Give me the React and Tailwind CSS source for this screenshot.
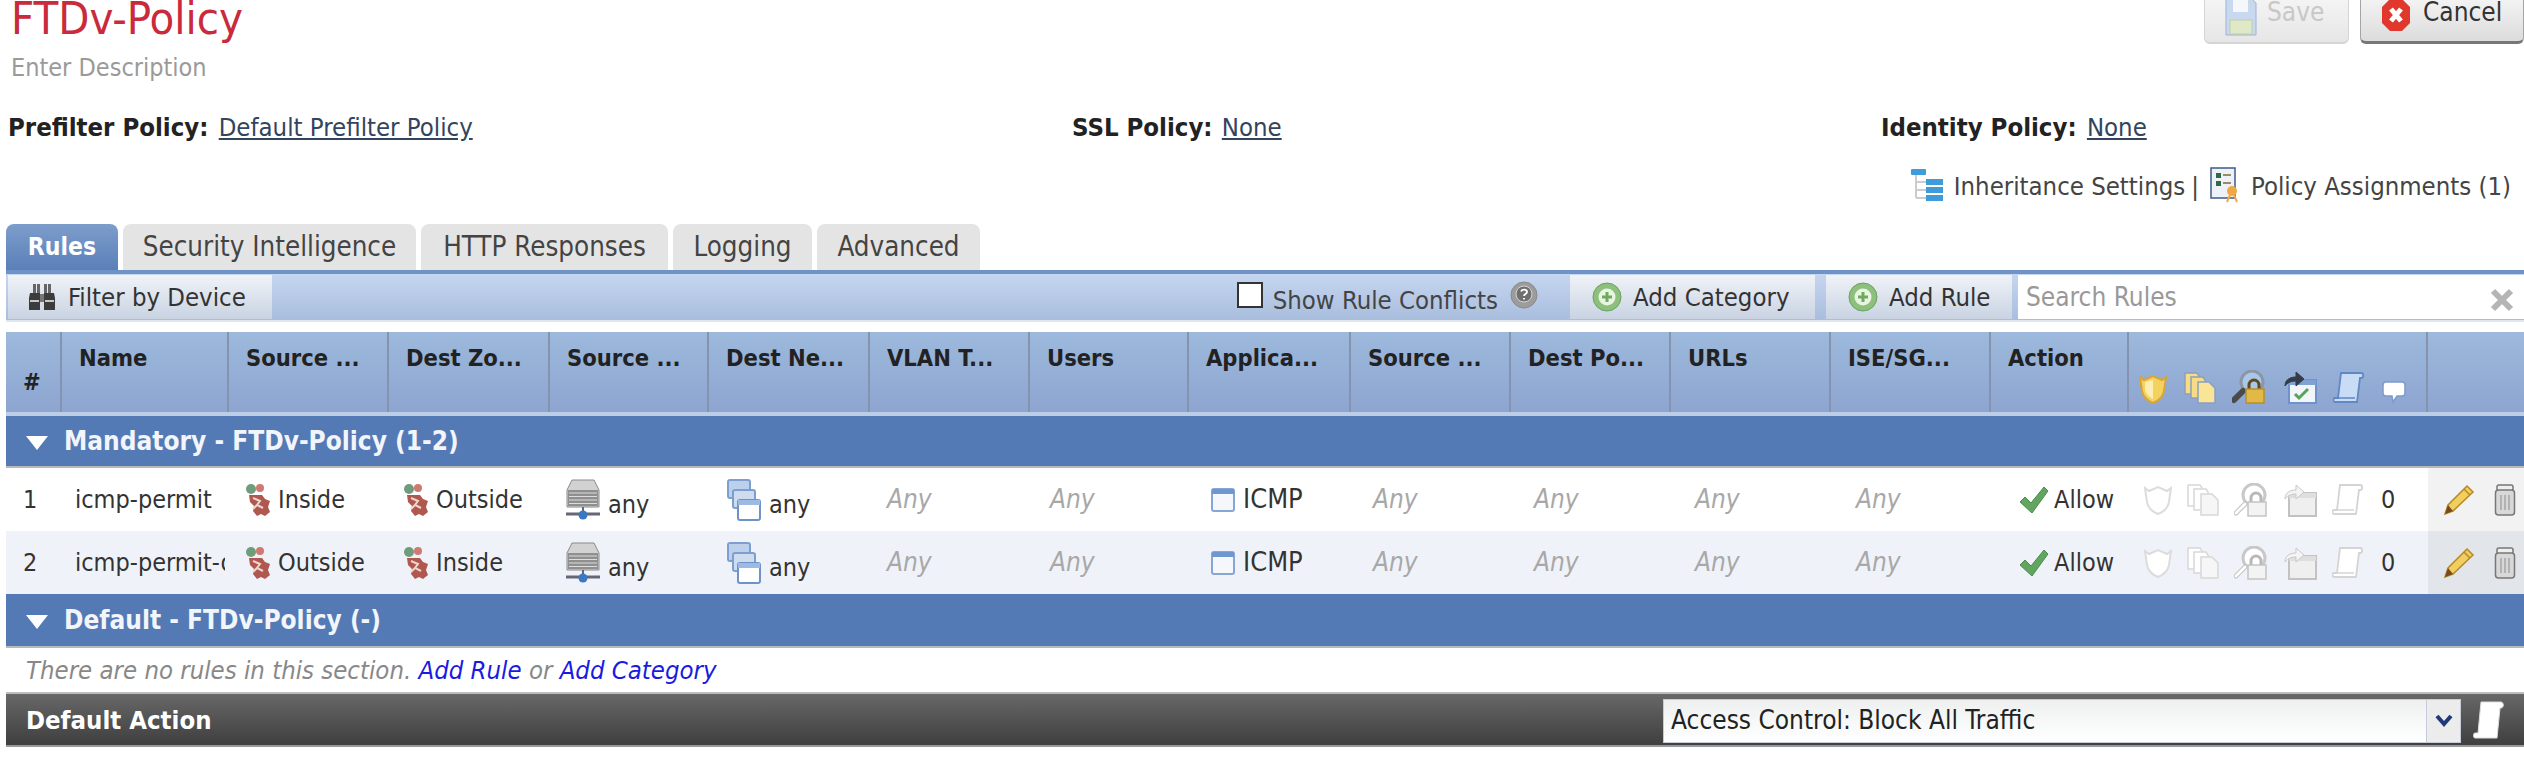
import React from 'react';

const font = { fontFamily: '"DejaVu Sans Condensed", "DejaVu Sans", sans-serif', fontStretch: 'condensed' };

const colsClass = 'grid grid-cols-[56px_167px_160px_161px_159px_161px_160px_159px_162px_160px_160px_160px_160px_138px_299px_96px]';

// -- Icons --

const ZoneIcon = () => (
    <svg width="26" height="34" viewBox="0 0 26 34" className="shrink-0">
        <circle cx="6" cy="6" r="5" fill="#6f9d7c" />
        <circle cx="15" cy="5" r="4" fill="#cf7a70" />
        <path d="M4 12h13l3 4 5 2-2 6 2 5-5 4-4-2-4 2-4-5 1-5-4-4z" fill="#b0574f" />
        <path d="M8 15l7 3-3 4 6 3M8 26l4-4" fill="none" stroke="#efd6cb" strokeWidth="2" />
    </svg>
);

const ServerIcon = () => (
    <svg width="34" height="42" viewBox="0 0 34 42" className="shrink-0">
        <path d="M6 1h22l5 10v17H1V11z" fill="#d2d2d2" stroke="#8a8a8a" />
        <rect x="2" y="11" width="30" height="16" fill="#8f8f8f" />
        <path d="M3 14h28M3 17.5h28M3 21h28M3 24.5h28" stroke="#dcdcdc" strokeWidth="1.2" />
        <path d="M0 35h34" stroke="#667" strokeWidth="3" />
        <path d="M17 28v6" stroke="#667" strokeWidth="2" />
        <circle cx="17" cy="36" r="4.5" fill="#3b78c4" />
    </svg>
);

const NetIcon = () => (
    <svg width="34" height="42" viewBox="0 0 34 42" className="shrink-0">
        <rect x="1" y="1" width="22" height="18" rx="2" fill="#bcd0ec" stroke="#7d9fd0" strokeWidth="2" />
        <rect x="6" y="11" width="22" height="18" rx="2" fill="#cfdcf0" stroke="#7d9fd0" strokeWidth="2" />
        <rect x="11" y="21" width="22" height="20" rx="2" fill="#fff" stroke="#6d93c9" strokeWidth="2" />
        <rect x="11" y="21" width="22" height="5" fill="#9dbae3" />
    </svg>
);

const AppIcon = () => (
    <svg width="24" height="26" viewBox="0 0 24 26" className="shrink-0">
        <rect x="1" y="2" width="22" height="22" rx="2" fill="#f6f7fb" stroke="#86a6d6" strokeWidth="2" />
        <rect x="1" y="2" width="22" height="5" fill="#6f96d0" />
    </svg>
);

const Check = () => (
    <svg width="30" height="28" viewBox="0 0 30 28" className="shrink-0">
        <path d="M1 16l5-5 6 6L25 1l4 4-16 22z" fill="#62a560" stroke="#4b8c4b" />
    </svg>
);

const PlusIcon = () => (
    <svg width="30" height="30" viewBox="0 0 30 30" className="shrink-0">
        <circle cx="15" cy="15" r="14" fill="#8cc07c" stroke="#6aa35e" />
        <circle cx="15" cy="15" r="8.5" fill="#e9f4e2" />
        <path d="M15 10v10M10 15h10" stroke="#6fab5f" strokeWidth="3" />
    </svg>
);

const HelpIcon = () => (
    <svg width="28" height="28" viewBox="0 0 28 28" className="shrink-0">
        <circle cx="14" cy="14" r="13" fill="#9c9c9c" stroke="#8a8a8a" />
        <circle cx="14" cy="13" r="8" fill="#6f6f6f" stroke="#d5d5d5" />
        <path d="M11 10.5c1-2.5 6-2.5 6 .5 0 2-3 2-3 4M14 17v1.5" fill="none" stroke="#fff" strokeWidth="1.8" />
    </svg>
);

const Binoculars = () => (
    <svg width="28" height="28" viewBox="0 0 28 28" className="shrink-0">
        <path d="M5 1h3v9H5zM9 1h3v9H9zM16 1h3v9h-3zM20 1h3v9h-3z" fill="#666" />
        <path d="M2 10h10v17H1V15zM16 10h10l1 5v12H16z" fill="#3c3c3c" />
        <path d="M12 11h4v8h-4z" fill="#777" />
        <path d="M2 18h9M17 18h9" stroke="#c8c8c8" strokeWidth="2" />
    </svg>
);

const ShieldIcon = ({ on }) => (
    <svg width="28" height="30" viewBox="0 0 28 30">
        <path d="M1 3l4 3 9-4 9 4 4-3-2 14c-1 6-6 10-11 12C9 27 4 23 3 17z" fill={on ? '#f4d25f' : '#fff'} stroke={on ? '#d9a53a' : '#dcdcdc'} strokeWidth="2" />
        {on && <path d="M14 6v19c-4-2-7-5-8-9V8z" fill="#fbeeb0" />}
    </svg>
);

const CopyIcon = ({ on }) => {
    const fill = on ? '#f6dc84' : '#fff';
    const stroke = on ? '#8c9fc2' : '#d8d8d8';
    return (
        <svg width="32" height="32" viewBox="0 0 32 32">
            <path d="M1 1h12l2 3v18H1z" fill={fill} stroke={stroke} strokeWidth="1.5" />
            <path d="M7 5h12l2 3v18H7z" fill={fill} stroke={stroke} strokeWidth="1.5" />
            <path d="M14 10h11l6 6v15H14z" fill={on ? '#fae597' : '#f6f6f6'} stroke={stroke} strokeWidth="1.5" />
        </svg>
    );
};

const LockIcon = ({ on }) => (
    <svg width="34" height="34" viewBox="0 0 34 34">
        <circle cx="20" cy="12" r="11" fill={on ? '#a9c7e8' : '#fff'} stroke={on ? '#8b97a6' : '#c8c8c8'} strokeWidth="3" />
        <path d="M11 21L2 30" stroke={on ? '#4a4a4a' : '#c8c8c8'} strokeWidth={on ? 6 : 5} strokeLinecap="round" />
        {!on && <path d="M11 21L2 30" stroke="#fff" strokeWidth="2.5" strokeLinecap="round" />}
        <path d="M17 19v-4a5 5 0 0 1 10 0v4" fill="none" stroke={on ? '#5e4a1c' : '#b8b8b8'} strokeWidth="3" />
        <rect x="14" y="19" width="18" height="14" fill={on ? '#e2b846' : '#f3f3f3'} stroke={on ? '#b88f2c' : '#c4c4c4'} strokeWidth="1.5" />
    </svg>
);

const MoveIcon = ({ on }) => (
    <svg width="34" height="34" viewBox="0 0 34 34">
        <rect x="6" y="10" width="27" height="23" fill={on ? '#f2f6fc' : '#efefef'} stroke={on ? '#6f93c8' : '#c2c2c2'} strokeWidth="2" />
        <rect x="6" y="10" width="27" height="5" fill={on ? '#7fa2d6' : '#dedede'} />
        {on && <path d="M12 24l4 4 9-9" fill="none" stroke="#57a35a" strokeWidth="3" />}
        <path d="M2 16c0-7 6-9 11-9V2l8 7-8 7v-5c-4 0-8 1-11 5z" fill={on ? '#333c48' : '#f4f4f4'} stroke={on ? '#333c48' : '#c8c8c8'} />
    </svg>
);

const ScrollIcon = ({ on }) => (
    <svg width="32" height="32" viewBox="0 0 32 32">
        <path d="M8 1h20c3 0 3 5 0 5h-1l-3 24H2c-2 0-2-4 0-4h3z" fill={on ? '#c9dcf6' : '#fff'} stroke={on ? '#5f88c4' : '#d4d4d4'} strokeWidth="1.8" />
        <path d="M2 26h20" stroke={on ? '#5f88c4' : '#d4d4d4'} strokeWidth="1.5" />
    </svg>
);

const CommentIcon = () => (
    <svg width="24" height="24" viewBox="0 0 24 24">
        <path d="M4 2h16a3 3 0 0 1 3 3v8a3 3 0 0 1-3 3h-5l-4 6-1-6H4a3 3 0 0 1-3-3V5a3 3 0 0 1 3-3z" fill="#fff" stroke="#7d9acb" strokeWidth="1.5" />
    </svg>
);

const Pencil = () => (
    <svg width="32" height="32" viewBox="0 0 32 32">
        <path d="M24 2l6 6L10 27l-8 3 3-9z" fill="#f1cf5e" stroke="#b58a2a" strokeWidth="1.5" />
        <path d="M5 21l5 6-8 3z" fill="#7a4a1e" />
        <path d="M21 5l6 6" stroke="#b58a2a" strokeWidth="1.5" />
    </svg>
);

const Trash = () => (
    <svg width="22" height="32" viewBox="0 0 22 32">
        <rect x="3" y="1" width="16" height="6" rx="2" fill="#eee" stroke="#777" strokeWidth="1.5" />
        <rect x="1.5" y="6" width="19" height="25" rx="3" fill="#d8d8d8" stroke="#777" strokeWidth="1.5" />
        <path d="M7 11v15M11 11v15M15 11v15" stroke="#a5a5a5" strokeWidth="1.5" />
    </svg>
);

// -- Rows --

const rules = [
    { n: 1, name: 'icmp-permit', from: 'Inside', to: 'Outside', alt: false },
    { n: 2, name: 'icmp-permit-out', from: 'Outside', to: 'Inside', alt: true },
];

const headers = ['Name', 'Source ...', 'Dest Zo...', 'Source ...', 'Dest Ne...', 'VLAN T...', 'Users', 'Applica...', 'Source ...', 'Dest Po...', 'URLs', 'ISE/SG...', 'Action'];

const AnyCell = ({ pad }) => <div className={`${pad} italic text-[#a8a8a8] text-[26px]`}>Any</div>;

function RuleRow({ rule }) {
    return (
        <div className={`${colsClass} h-[63px] items-center text-[25px] text-[#333] ${rule.alt ? 'bg-[#eff3f9]' : 'bg-white'}`}>
            <div className="pl-[17px]">{rule.n}</div>
            <div className="pl-[13px] mr-[4px] overflow-hidden whitespace-nowrap">{rule.name}</div>
            <div className="pl-[16px] flex items-center gap-[7px]"><ZoneIcon />{rule.from}</div>
            <div className="pl-[14px] flex items-center gap-[7px]"><ZoneIcon />{rule.to}</div>
            <div className="pl-[16px] flex items-end gap-[8px]"><ServerIcon /><span className="leading-[32px]">any</span></div>
            <div className="pl-[18px] flex items-end gap-[8px]"><NetIcon /><span className="leading-[32px]">any</span></div>
            <AnyCell pad="pl-[17px]" />
            <AnyCell pad="pl-[20px]" />
            <div className="pl-[22px] flex items-center gap-[8px]"><AppIcon /><span className="text-[27px]">ICMP</span></div>
            <AnyCell pad="pl-[22px]" />
            <AnyCell pad="pl-[23px]" />
            <AnyCell pad="pl-[24px]" />
            <AnyCell pad="pl-[25px]" />
            <div className="pl-[28px] flex items-center gap-[5px]"><Check />Allow</div>
            <div className="pl-[15px] flex items-center gap-[15px]">
                <ShieldIcon />
                <CopyIcon />
                <LockIcon />
                <MoveIcon />
                <ScrollIcon />
                <span className="ml-[2px]">0</span>
            </div>
            <div className={`h-full pl-[15px] flex items-center gap-[19px] ${rule.alt ? 'bg-[#e2e5ea]' : 'bg-[#f2f2f2]'}`}>
                <Pencil />
                <Trash />
            </div>
        </div>
    );
}

function SectionBar({ children, className }) {
    return (
        <div className={`bg-[#547ab5] border-b-2 border-[#b9b9b9] flex items-center pl-[20px] gap-[16px] font-bold text-[26px] text-[#f2f5fa] ${className}`}>
            <span className="w-0 h-0 border-l-[11px] border-r-[11px] border-t-[14px] border-l-transparent border-r-transparent border-t-white mt-[4px]" />
            {children}
        </div>
    );
}

const ToolButton = ({ children, className }) => (
    <div className={`h-[44px] flex items-center bg-gradient-to-b from-[#f0f3f8] to-[#c9d3e2] text-[25.5px] text-[#333] ${className}`}>
        {children}
    </div>
);

export default function App() {
    return (
        <div className="w-[2524px] h-[770px] bg-white overflow-hidden" style={font}>
            {/* Title and save buttons */}
            <div className="h-[110px] flex justify-between">
                <div className="pl-[11px]">
                    <div className="text-[45px] leading-[46px] -mt-[4px] text-[#c92a3c]">FTDv-Policy</div>
                    <div className="text-[25px] leading-[26px] mt-[13px] text-[#9a9a9a]">Enter Description</div>
                </div>
                <div className="flex gap-[11px] -mt-[20px] h-[64px]">
                    <div className="w-[145px] rounded-b-[6px] border border-[#d5d5d5] border-b-2 bg-gradient-to-b from-[#fafafa] to-[#e6e6e6] flex items-center pl-[20px] pt-[2px] gap-[10px] text-[26px] text-[#c8c8c8]">
                        <svg width="32" height="38" viewBox="0 0 32 38" className="shrink-0 mt-[8px]">
                            <path d="M1 1h26l4 4v32H1z" fill="#c8d8ef" stroke="#9cb4d8" />
                            <rect x="8" y="1" width="15" height="13" fill="#f5f7fb" />
                            <rect x="5" y="22" width="22" height="14" fill="#dfe8c7" stroke="#c2cfa3" />
                        </svg>
                        Save
                    </div>
                    <div className="w-[164px] rounded-b-[6px] border border-[#a5a5a5] border-b-[3px] border-b-[#777] bg-gradient-to-b from-[#fdfdfd] to-[#dcdcdc] flex items-center pl-[20px] pt-[2px] gap-[12px] text-[26px] text-[#333]">
                        <svg width="30" height="34" viewBox="0 0 30 34" className="shrink-0 mt-[6px]">
                            <path d="M9 1h12l8 8v16l-8 8H9l-8-8V9z" fill="#e0382c" />
                            <path d="M10 11l10 12M20 11L10 23" stroke="#fff" strokeWidth="5" />
                        </svg>
                        Cancel
                    </div>
                </div>
            </div>

            {/* Policy links */}
            <div className="h-[34px] flex items-center text-[25.5px] text-[#222]">
                <div className="w-[1072px] pl-[8px]"><b>Prefilter Policy:</b> <a className="ml-[3px] text-[#33445e] underline">Default Prefilter Policy</a></div>
                <div className="w-[809px]"><b>SSL Policy:</b> <a className="ml-[2px] text-[#33445e] underline">None</a></div>
                <div><b>Identity Policy:</b> <a className="ml-[3px] text-[#33445e] underline">None</a></div>
            </div>

            <div className="h-[80px] pt-[23px] pr-[13px] flex justify-end items-start gap-[11px] text-[25.5px] text-[#444]">
                <svg width="32" height="32" viewBox="0 0 32 32" className="shrink-0 mt-[2px]">
                    <path d="M5 5v24M5 13h10M5 21h10M5 29h10" stroke="#ccc" strokeWidth="2" fill="none" />
                    <rect x="0" y="0" width="15" height="6" rx="1" fill="#3f9cd8" />
                    <rect x="15" y="10" width="17" height="6" fill="#3f9cd8" />
                    <rect x="15" y="18" width="17" height="6" fill="#3f9cd8" />
                    <rect x="15" y="26" width="17" height="6" fill="#3f9cd8" />
                </svg>
                <span>Inheritance Settings</span>
                <span className="-ml-[5px]">|</span>
                <svg width="30" height="36" viewBox="0 0 30 36" className="shrink-0">
                    <rect x="1" y="1" width="24" height="30" fill="#eef2f8" stroke="#3c5a8c" strokeWidth="1.5" />
                    <rect x="6" y="6" width="5" height="5" fill="#2e6b3e" />
                    <rect x="6" y="14" width="5" height="5" fill="#2e6b3e" />
                    <path d="M13 8h8M13 16h8" stroke="#9a8a6a" strokeWidth="2" />
                    <circle cx="22" cy="24" r="5" fill="#f0a840" />
                    <path d="M20 28l-3 7M24 28l3 7" stroke="#f0a840" strokeWidth="2" />
                </svg>
                <span>Policy Assignments (1)</span>
            </div>

            {/* Tabs */}
            <div className="h-[46px] pl-[6px] flex gap-[5px] text-[27.5px] text-[#444]">
                <div className="w-[112px] rounded-t-[8px] bg-gradient-to-b from-[#7d9dcb] to-[#5a80b8] flex items-center justify-center font-bold text-white text-[24.5px]">Rules</div>
                <div className="w-[293px] rounded-t-[8px] bg-[#e4e4e4] flex items-center justify-center">Security Intelligence</div>
                <div className="w-[247px] rounded-t-[8px] bg-[#e4e4e4] flex items-center justify-center">HTTP Responses</div>
                <div className="w-[139px] rounded-t-[8px] bg-[#e4e4e4] flex items-center justify-center">Logging</div>
                <div className="w-[163px] rounded-t-[8px] bg-[#e4e4e4] flex items-center justify-center">Advanced</div>
            </div>

            {/* Toolbar */}
            <div className="ml-[6px]">
                <div className="h-[52px] border-t-4 border-[#6f93c6] border-b-2 border-b-[#dfe6f2] bg-gradient-to-b from-[#c5d6f0] to-[#a9bddd] flex items-center justify-between">
                    <ToolButton className="w-[264px] ml-[2px] pl-[20px] gap-[12px]">
                        <Binoculars />
                        Filter by Device
                    </ToolButton>
                    <div className="flex items-center">
                        <div className="w-[26px] h-[26px] border-2 border-[#333] bg-white -mt-[4px]" />
                        <span className="ml-[10px] mt-[6px] text-[25.5px] text-[#444]">Show Rule Conflicts</span>
                        <span className="ml-[12px] -mt-[4px]"><HelpIcon /></span>
                        <ToolButton className="w-[245px] ml-[32px] pl-[22px] gap-[11px]"><PlusIcon />Add Category</ToolButton>
                        <ToolButton className="w-[186px] ml-[11px] pl-[22px] gap-[11px]"><PlusIcon />Add Rule</ToolButton>
                        <div className="w-[506px] h-[44px] ml-[6px] bg-white flex items-center justify-between pl-[8px] pr-[10px] text-[26px] text-[#999]">
                            Search Rules
                            <svg width="24" height="24" viewBox="0 0 24 24" className="mt-[6px]">
                                <path d="M3 3l18 18M21 3L3 21" stroke="#b5b5b5" strokeWidth="6" />
                            </svg>
                        </div>
                    </div>
                </div>

                {/* Table header */}
                <div className={`${colsClass} mt-[10px] h-[84px] border-b-4 border-[#bccde6] bg-gradient-to-b from-[#9db9dc] to-[#8da5d0] text-[23.5px] font-bold text-[#222]`}>
                    <div className="border-r-2 border-[#8494ae] flex items-end pb-[12px] pl-[17px]">#</div>
                    {headers.map((label, i) => (
                        <div key={i} className="border-r-2 border-[#8494ae] pt-[9px] pl-[17px] whitespace-nowrap">{label}</div>
                    ))}
                    <div className="border-r-2 border-[#8494ae] pl-[10px] pb-[8px] flex items-end justify-between pr-[20px]">
                        <ShieldIcon on />
                        <CopyIcon on />
                        <LockIcon on />
                        <MoveIcon on />
                        <ScrollIcon on />
                        <CommentIcon />
                    </div>
                    <div />
                </div>

                <SectionBar className="h-[52px]">Mandatory - FTDv-Policy (1-2)</SectionBar>
                {rules.map((rule) => <RuleRow key={rule.n} rule={rule} />)}
                <SectionBar className="h-[54px]">Default - FTDv-Policy (-)</SectionBar>

                <div className="h-[44px] pl-[20px] flex items-center italic text-[25.5px] text-[#888]">
                    There are no rules in this section.&nbsp;<a className="text-[#1a1ae0]">Add Rule</a>&nbsp;or&nbsp;<a className="text-[#1a1ae0]">Add Category</a>
                </div>

                {/* Default action */}
                <div className="h-[55px] pt-[2px] border-t-2 border-[#bdbdbd] border-b-2 border-b-[#999] bg-gradient-to-b from-[#686868] to-[#3f3f3f] flex items-center justify-between pl-[20px] pr-[19px]">
                    <span className="font-bold text-[25.5px] text-white">Default Action</span>
                    <div className="flex items-center gap-[12px]">
                        <div className="w-[798px] h-[44px] flex border border-[#c5cbdb] bg-gradient-to-b from-[#eef0f0] to-white text-[26px] text-[#222]">
                            <div className="flex-1 flex items-center pl-[7px]">Access Control: Block All Traffic</div>
                            <div className="w-[34px] bg-[#ececec] border-l border-[#c5cbdb] flex items-center justify-center">
                                <svg width="18" height="14" viewBox="0 0 18 14">
                                    <path d="M2 2l7 8 7-8" fill="none" stroke="#1f3a78" strokeWidth="4" />
                                </svg>
                            </div>
                        </div>
                        <svg width="32" height="40" viewBox="0 0 32 40">
                            <path d="M8 1h20c3 0 3 6 0 6h-1l-3 30H2c-2 0-2-5 0-5h3z" fill="#fff" stroke="#ddd" />
                        </svg>
                    </div>
                </div>
            </div>
        </div>
    );
}
